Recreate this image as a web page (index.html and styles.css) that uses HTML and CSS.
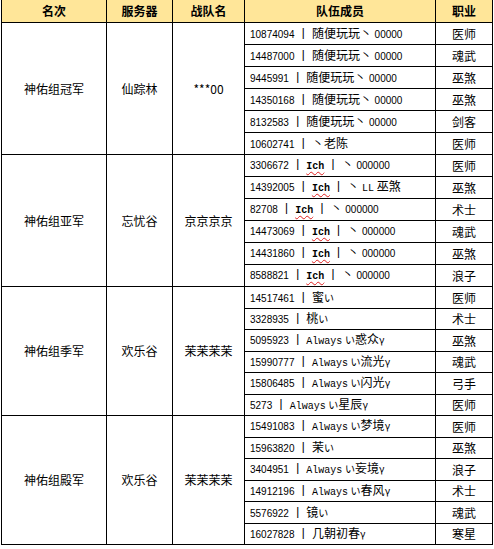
FILE: index.html
```html
<!DOCTYPE html>
<html lang="zh-CN">
<head>
<meta charset="utf-8">
<title>队伍成员</title>
<link rel="stylesheet" href="styles.css">
</head>
<body>
<table class="roster">
  <colgroup>
    <col class="c-rank">
    <col class="c-server">
    <col class="c-team">
    <col class="c-members">
    <col class="c-job">
  </colgroup>
  <thead>
    <tr class="head">
      <th>名次</th><th>服务器</th><th>战队名</th><th>队伍成员</th><th>职业</th>
    </tr>
  </thead>
  <tbody>
    <tr class="r22"><td rowspan="6" class="mid">神佑组冠军</td><td rowspan="6" class="mid">仙踪林</td><td rowspan="6" class="mid">***00</td><td class="mem"><span class="id">10874094</span> 丨 随便玩玩丶 <span class="id">00000</span></td><td class="job">医师</td></tr>
    <tr class="r22"><td class="mem"><span class="id">14487000</span> 丨 随便玩玩丶 <span class="id">00000</span></td><td class="job">魂武</td></tr>
    <tr class="r22"><td class="mem"><span class="id">9445991</span> 丨 随便玩玩丶 <span class="id">00000</span></td><td class="job">巫煞</td></tr>
    <tr class="r22"><td class="mem"><span class="id">14350168</span> 丨 随便玩玩丶 <span class="id">00000</span></td><td class="job">巫煞</td></tr>
    <tr class="r22"><td class="mem"><span class="id">8132583</span> 丨 随便玩玩丶 <span class="id">00000</span></td><td class="job">剑客</td></tr>
    <tr class="r22"><td class="mem"><span class="id">10602741</span> 丨 丶老陈</td><td class="job">医师</td></tr>

    <tr class="r22"><td rowspan="6" class="mid">神佑组亚军</td><td rowspan="6" class="mid">忘忧谷</td><td rowspan="6" class="mid">京京京京</td><td class="mem"><span class="id">3306672</span> 丨 <span class="lat sp">Ich</span> 丨 丶 <span class="id">000000</span></td><td class="job">医师</td></tr>
    <tr class="r22"><td class="mem"><span class="id">14392005</span> 丨 <span class="lat sp">Ich</span> 丨 丶 <span class="lat">LL</span> 巫煞</td><td class="job">巫煞</td></tr>
    <tr class="r22"><td class="mem"><span class="id">82708</span> 丨 <span class="lat sp">Ich</span> 丨 丶 <span class="id">000000</span></td><td class="job">术士</td></tr>
    <tr class="r22"><td class="mem"><span class="id">14473069</span> 丨 <span class="lat sp">Ich</span> 丨 丶 <span class="id">000000</span></td><td class="job">魂武</td></tr>
    <tr class="r22"><td class="mem"><span class="id">14431860</span> 丨 <span class="lat sp">Ich</span> 丨 丶 <span class="id">000000</span></td><td class="job">巫煞</td></tr>
    <tr class="r22"><td class="mem"><span class="id">8588821</span> 丨 <span class="lat sp">Ich</span> 丨 丶 <span class="id">000000</span></td><td class="job">浪子</td></tr>

    <tr class="r22"><td rowspan="6" class="mid">神佑组季军</td><td rowspan="6" class="mid">欢乐谷</td><td rowspan="6" class="mid">茉茉茉茉</td><td class="mem"><span class="id">14517461</span> 丨 蜜<span class="small">い</span></td><td class="job">医师</td></tr>
    <tr class="r21"><td class="mem"><span class="id">3328935</span> 丨 桃<span class="small">い</span></td><td class="job">术士</td></tr>
    <tr class="r22"><td class="mem"><span class="id">5095923</span> 丨 <span class="lat">Always</span> <span class="small">い</span>惑众<span class="small">γ</span></td><td class="job">巫煞</td></tr>
    <tr class="r21"><td class="mem"><span class="id">15990777</span> 丨 <span class="lat">Always</span> <span class="small">い</span>流光<span class="small">γ</span></td><td class="job">魂武</td></tr>
    <tr class="r22"><td class="mem"><span class="id">15806485</span> 丨 <span class="lat">Always</span> <span class="small">い</span>闪光<span class="small">γ</span></td><td class="job">弓手</td></tr>
    <tr class="r21"><td class="mem"><span class="id">5273</span> 丨 <span class="lat">Always</span> <span class="small">い</span>星辰<span class="small">γ</span></td><td class="job">医师</td></tr>

    <tr class="r22"><td rowspan="6" class="mid">神佑组殿军</td><td rowspan="6" class="mid">欢乐谷</td><td rowspan="6" class="mid">茉茉茉茉</td><td class="mem"><span class="id">15491083</span> 丨 <span class="lat">Always</span> <span class="small">い</span>梦境<span class="small">γ</span></td><td class="job">医师</td></tr>
    <tr class="r21"><td class="mem"><span class="id">15963820</span> 丨 茉<span class="small">い</span></td><td class="job">巫煞</td></tr>
    <tr class="r22"><td class="mem"><span class="id">3404951</span> 丨 <span class="lat">Always</span> <span class="small">い</span>妄境<span class="small">γ</span></td><td class="job">浪子</td></tr>
    <tr class="r21"><td class="mem"><span class="id">14912196</span> 丨 <span class="lat">Always</span> <span class="small">い</span>春风<span class="small">γ</span></td><td class="job">术士</td></tr>
    <tr class="r22"><td class="mem"><span class="id">5576922</span> 丨 镜<span class="small">い</span></td><td class="job">魂武</td></tr>
    <tr class="r21"><td class="mem"><span class="id">16027828</span> 丨 几朝初春<span class="small">γ</span></td><td class="job">寒星</td></tr>
  </tbody>
</table>
</body>
</html>
```

FILE: styles.css
```css
html, body {
  margin: 0;
  padding: 0;
  background: #ffffff;
}

body {
  font-family: "Noto Sans CJK SC", "Liberation Sans", sans-serif;
  font-size: 12px;
  color: #000000;
}

.roster {
  border-collapse: collapse;
  table-layout: fixed;
  width: 492px;
  margin-left: 1px;
}

.c-rank { width: 105px; }
.c-server { width: 66px; }
.c-team { width: 72px; }
.c-members { width: 191px; }
.c-job { width: 57px; }

.roster th,
.roster td {
  border: 1px solid #000000;
  padding: 0;
  line-height: 14px;
  white-space: nowrap;
  overflow: hidden;
}

.head th {
  border-top: none;
  height: 22px;
  background: #ffe699;
  font-weight: bold;
  font-size: 12px;
  text-align: center;
  vertical-align: middle;
}

.r22 { height: 22px; }
.r21 { height: 21px; }

.mid {
  text-align: center;
  vertical-align: middle;
}

.mem {
  text-align: left;
  padding-left: 5px !important;
  vertical-align: middle;
}

.job {
  text-align: center;
  vertical-align: middle;
}

.id {
  font-family: "Liberation Sans", sans-serif;
  font-size: 10px;
}

.lat {
  font-family: "Liberation Mono", monospace;
  font-size: 10px;
}

.sp {
  font-weight: bold;
  text-decoration: underline wavy #e02020;
  text-decoration-thickness: 1px;
  text-underline-offset: 2px;
}

.small {
  font-size: 10px;
}
```
